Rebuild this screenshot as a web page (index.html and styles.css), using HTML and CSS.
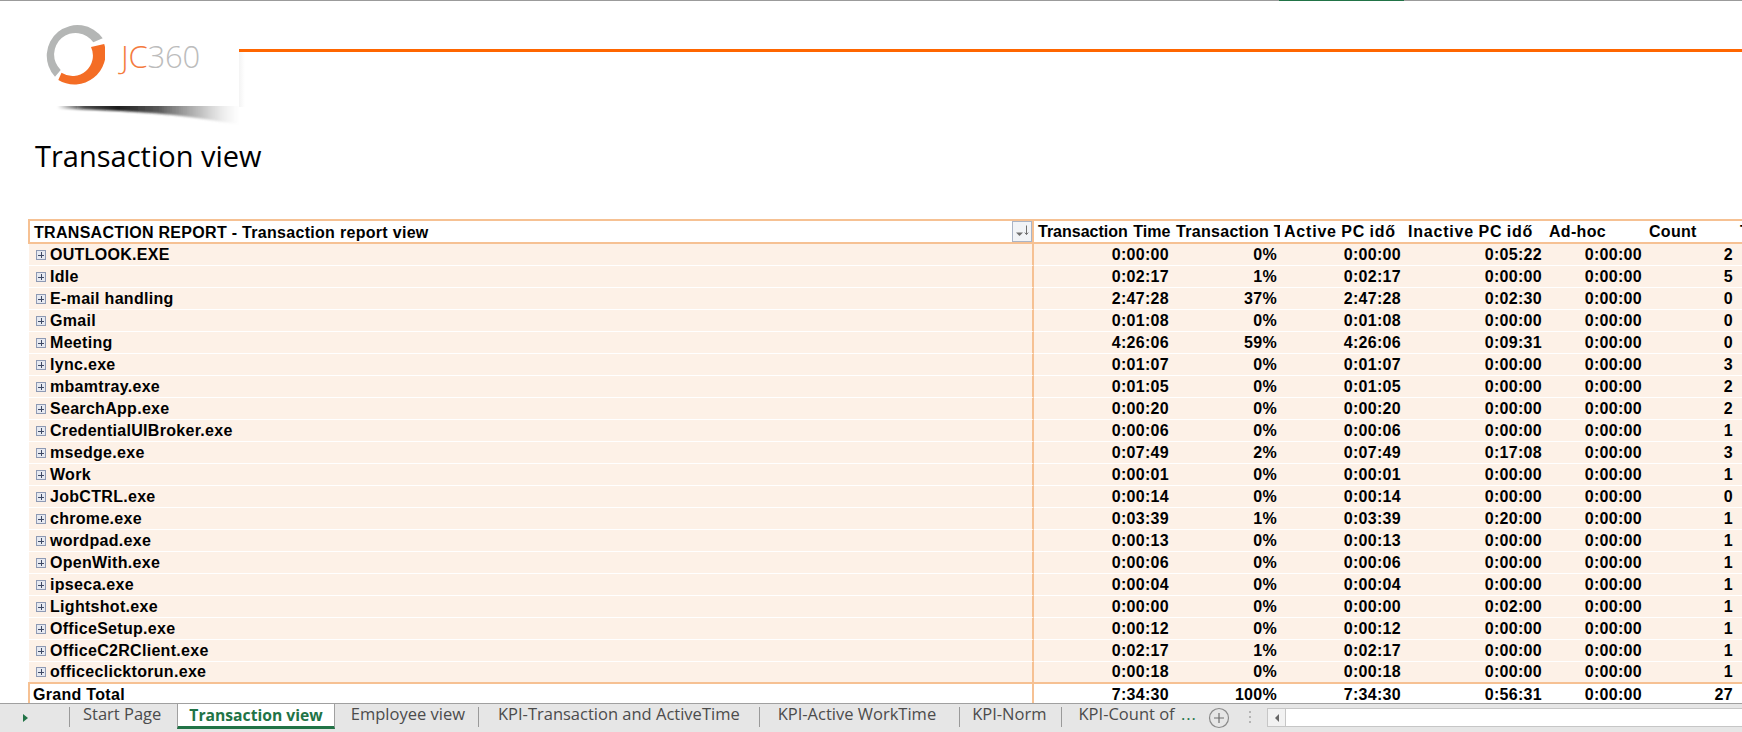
FILE: index.html
```html
<!DOCTYPE html>
<html lang="en">
<head>
<meta charset="utf-8">
<title>Transaction view</title>
<link rel="stylesheet" href="styles.css">
</head>
<body>
<div class="topline"><span class="topline-accent"></span></div>
<header class="brand">
  <div class="logo-block">
    <div class="logo">
      <svg class="logo-ring" width="60" height="62" viewBox="45 23 60 62" aria-hidden="true">
        <path fill="#b4b6b5" d="M55 76.7A30.7 30.7 0 1 1 102.7 38.3L93.3 42.3A21.5 21.5 0 1 0 60.7 70Z"/>
        <path fill="#f46d25" d="M104.2 44A31.2 31.2 0 0 1 58.3 80L61.5 72.8A20.4 20.4 0 0 0 91 47Z"/>
      </svg>
      <span class="logo-text"><span class="logo-jc">JC</span>360</span>
    </div>
    <svg class="logo-shadow" width="239" height="22" viewBox="0 0 239 22" aria-hidden="true">
      <defs>
        <linearGradient id="shade" x1="0" x2="1" y1="0" y2="0">
          <stop offset="0.13" stop-color="#000" stop-opacity="0"/>
          <stop offset="0.26" stop-color="#111" stop-opacity="0.75"/>
          <stop offset="0.42" stop-color="#111" stop-opacity="0.95"/>
          <stop offset="0.62" stop-color="#333" stop-opacity="0.8"/>
          <stop offset="0.82" stop-color="#777" stop-opacity="0.45"/>
          <stop offset="1" stop-color="#bbb" stop-opacity="0"/>
        </linearGradient>
        <filter id="soft" x="-5%" y="-50%" width="110%" height="200%"><feGaussianBlur stdDeviation="1.1"/></filter>
      </defs>
      <path fill="url(#shade)" filter="url(#soft)" d="M30 -4H239V18C215 15 190 10 150 7C110 4 70 3 30 2Z"/>
    </svg>
  </div>
  <div class="rule"></div>
</header>
<h1 class="page-title">Transaction view</h1>
<main class="report">
<table class="pivot">
  <colgroup><col class="c-a"><col class="c-b"><col class="c-c"><col class="c-d"><col class="c-e"><col class="c-f"><col class="c-g"><col class="c-h"></colgroup>
  <thead>
    <tr>
      <th class="label-head"><span class="label-wrap">TRANSACTION REPORT - Transaction report view<span class="filter"><svg width="19" height="18" viewBox="0 0 19 18" aria-hidden="true"><path fill="#6f6f6f" d="M3 10.5h7l-3.500 3.500z"/><path fill="none" stroke="#6f6f6f" d="M13.500 3.500v9M11.800 10.600l1.700 2 1.700-2"/></svg></span></span></th>
      <th class="head-first">Transaction Time</th><th>Transaction Time %</th><th class="head-wide">Active PC idő</th><th class="head-wide">Inactive PC idő</th><th>Ad-hoc</th><th>Count</th><th>T</th>
    </tr>
  </thead>
  <tbody>
    <tr><td class="name"><i class="exp"></i>OUTLOOK.EXE</td><td>0:00:00</td><td>0%</td><td>0:00:00</td><td>0:05:22</td><td>0:00:00</td><td>2</td><td></td></tr>
    <tr><td class="name"><i class="exp"></i>Idle</td><td>0:02:17</td><td>1%</td><td>0:02:17</td><td>0:00:00</td><td>0:00:00</td><td>5</td><td></td></tr>
    <tr><td class="name"><i class="exp"></i>E-mail handling</td><td>2:47:28</td><td>37%</td><td>2:47:28</td><td>0:02:30</td><td>0:00:00</td><td>0</td><td></td></tr>
    <tr><td class="name"><i class="exp"></i>Gmail</td><td>0:01:08</td><td>0%</td><td>0:01:08</td><td>0:00:00</td><td>0:00:00</td><td>0</td><td></td></tr>
    <tr><td class="name"><i class="exp"></i>Meeting</td><td>4:26:06</td><td>59%</td><td>4:26:06</td><td>0:09:31</td><td>0:00:00</td><td>0</td><td></td></tr>
    <tr><td class="name"><i class="exp"></i>lync.exe</td><td>0:01:07</td><td>0%</td><td>0:01:07</td><td>0:00:00</td><td>0:00:00</td><td>3</td><td></td></tr>
    <tr><td class="name"><i class="exp"></i>mbamtray.exe</td><td>0:01:05</td><td>0%</td><td>0:01:05</td><td>0:00:00</td><td>0:00:00</td><td>2</td><td></td></tr>
    <tr><td class="name"><i class="exp"></i>SearchApp.exe</td><td>0:00:20</td><td>0%</td><td>0:00:20</td><td>0:00:00</td><td>0:00:00</td><td>2</td><td></td></tr>
    <tr><td class="name"><i class="exp"></i>CredentialUIBroker.exe</td><td>0:00:06</td><td>0%</td><td>0:00:06</td><td>0:00:00</td><td>0:00:00</td><td>1</td><td></td></tr>
    <tr><td class="name"><i class="exp"></i>msedge.exe</td><td>0:07:49</td><td>2%</td><td>0:07:49</td><td>0:17:08</td><td>0:00:00</td><td>3</td><td></td></tr>
    <tr><td class="name"><i class="exp"></i>Work</td><td>0:00:01</td><td>0%</td><td>0:00:01</td><td>0:00:00</td><td>0:00:00</td><td>1</td><td></td></tr>
    <tr><td class="name"><i class="exp"></i>JobCTRL.exe</td><td>0:00:14</td><td>0%</td><td>0:00:14</td><td>0:00:00</td><td>0:00:00</td><td>0</td><td></td></tr>
    <tr><td class="name"><i class="exp"></i>chrome.exe</td><td>0:03:39</td><td>1%</td><td>0:03:39</td><td>0:20:00</td><td>0:00:00</td><td>1</td><td></td></tr>
    <tr><td class="name"><i class="exp"></i>wordpad.exe</td><td>0:00:13</td><td>0%</td><td>0:00:13</td><td>0:00:00</td><td>0:00:00</td><td>1</td><td></td></tr>
    <tr><td class="name"><i class="exp"></i>OpenWith.exe</td><td>0:00:06</td><td>0%</td><td>0:00:06</td><td>0:00:00</td><td>0:00:00</td><td>1</td><td></td></tr>
    <tr><td class="name"><i class="exp"></i>ipseca.exe</td><td>0:00:04</td><td>0%</td><td>0:00:04</td><td>0:00:00</td><td>0:00:00</td><td>1</td><td></td></tr>
    <tr><td class="name"><i class="exp"></i>Lightshot.exe</td><td>0:00:00</td><td>0%</td><td>0:00:00</td><td>0:02:00</td><td>0:00:00</td><td>1</td><td></td></tr>
    <tr><td class="name"><i class="exp"></i>OfficeSetup.exe</td><td>0:00:12</td><td>0%</td><td>0:00:12</td><td>0:00:00</td><td>0:00:00</td><td>1</td><td></td></tr>
    <tr><td class="name"><i class="exp"></i>OfficeC2RClient.exe</td><td>0:02:17</td><td>1%</td><td>0:02:17</td><td>0:00:00</td><td>0:00:00</td><td>1</td><td></td></tr>
    <tr><td class="name"><i class="exp"></i>officeclicktorun.exe</td><td>0:00:18</td><td>0%</td><td>0:00:18</td><td>0:00:00</td><td>0:00:00</td><td>1</td><td></td></tr>
  </tbody>
  <tfoot>
    <tr><td class="total-label">Grand Total</td><td>7:34:30</td><td>100%</td><td>7:34:30</td><td>0:56:31</td><td>0:00:00</td><td>27</td><td></td></tr>
  </tfoot>
</table>
</main>
<footer class="tabbar">
  <div class="tab-nav"><span class="nav-next"></span></div>
  <nav class="tabs">
    <a class="tab tab-start">Start Page</a>
    <a class="tab tab-active">Transaction view</a>
    <a class="tab tab-emp">Employee view</a>
    <a class="tab tab-kpi1">KPI-Transaction and ActiveTime</a>
    <a class="tab tab-kpi2">KPI-Active WorkTime</a>
    <a class="tab tab-kpi3">KPI-Norm</a>
    <a class="tab tab-kpi4">KPI-Count of <span class="more">...</span></a>
  </nav>
  <span class="add-tab"><svg width="22" height="22" viewBox="0 0 22 22" aria-hidden="true"><circle cx="11" cy="11" r="9.5" fill="none" stroke="#8a8a8a" stroke-width="1.2"/><path d="M11 6v10M6 11h10" stroke="#6f6f6f" stroke-width="1.2"/></svg></span>
  <span class="grip"></span>
  <div class="hscroll"><span class="hscroll-btn"><span class="arrow-left"></span></span></div>
</footer>
</body>
</html>
```
FILE: styles.css
```css
html, body {
  margin: 0;
  padding: 0;
}
body {
  width: 1742px;
  height: 732px;
  overflow: hidden;
  background: #fff;
  display: flex;
  flex-direction: column;
  font-family: "Liberation Sans", Arial, sans-serif;
  color: #000;
}
.topline {
  height: 1px;
  flex: none;
  background: #9b9b9b;
  padding-left: 1279px;
}
.topline-accent {
  display: block;
  width: 125px;
  height: 1px;
  background: #217346;
}
.brand {
  flex: none;
  display: flex;
  height: 135px;
  background: linear-gradient(90deg, #f4f4f4, #fff) 239px 51px / 6px 55px no-repeat;
}
.logo-block {
  width: 239px;
  flex: none;
  display: flex;
  flex-direction: column;
}
.logo {
  height: 105px;
  flex: none;
  display: flex;
  align-items: flex-start;
  padding: 22px 0 0 45px;
  box-sizing: border-box;
}
.logo-ring {
  flex: none;
}
.logo-text {
  font-family: "Open Sans", sans-serif;
  font-weight: 300;
  font-size: 31px;
  line-height: 36px;
  margin: 15px 0 0 16px;
  color: #bcbcbc;
  letter-spacing: -0.2px;
}
.logo-jc {
  color: #f47b3e;
}
.logo-shadow {
  display: block;
  flex: none;
}
.rule {
  flex: 1;
  height: 3px;
  margin-top: 48px;
  background: #ff6600;
}
.page-title {
  flex: none;
  margin: 0;
  padding-left: 35px;
  font-family: "Open Sans", sans-serif;
  font-weight: 400;
  font-size: 29px;
  line-height: 40px;
  height: 83px;
}
.report {
  flex: 1;
  min-height: 0;
  overflow: hidden;
  padding-left: 28px;
}
.pivot {
  table-layout: fixed;
  width: 1732px;
  border-collapse: separate;
  border-spacing: 0;
  font-size: 16px;
  font-weight: 700;
  line-height: 21px;
  letter-spacing: 0.3px;
}
.c-a { width: 1006px; }
.c-b { width: 138px; }
.c-c { width: 108px; }
.c-d { width: 124px; }
.c-e { width: 141px; }
.c-f { width: 100px; }
.c-g { width: 91px; }
.c-h { width: 24px; }
.pivot th,
.pivot td {
  padding: 0 3px 0 0;
  white-space: nowrap;
  overflow: hidden;
}
.pivot th {
  text-align: left;
  padding: 1px 0 0 4px;
  height: 20px;
  line-height: 20px;
  background: #fff;
  border-top: 2px solid #f6c193;
  border-bottom: 2px solid #f6c193;
}
.pivot .head-first {
  letter-spacing: 0;
  word-spacing: 1px;
}
.pivot .head-wide {
  letter-spacing: 0.8px;
  word-spacing: -0.8px;
}
.pivot .label-head {
  border-left: 2px solid #f6c193;
  border-right: 2px solid #f6c193;
  padding: 0 0 0 4px;
  height: 21px;
}
.label-wrap {
  display: flex;
  height: 21px;
  line-height: 23px;
  align-items: flex-start;
  justify-content: space-between;
}
.filter {
  width: 18px;
  height: 19px;
  flex: none;
  display: block;
  overflow: hidden;
  border: 1px solid #aab4c6;
  background: #f2f4f7;
}
.filter svg {
  display: block;
}
.pivot tbody td {
  height: 21px;
  text-align: right;
  background: #fdf1e7;
  border-bottom: 1px solid #fff;
}
.pivot tbody td.name {
  text-align: left;
  padding-left: 7px;
  border-left: 1px solid #fff;
  border-right: 2px solid #f6c193;
}
.pivot tbody tr:last-child td {
  border-bottom: 0;
  height: 20px;
  line-height: 20px;
}
.exp {
  display: inline-block;
  width: 8px;
  height: 8px;
  margin-right: 4px;
  vertical-align: 0;
  border: 1px solid #8e99b3;
  background:
    linear-gradient(#3f4a66, #3f4a66) center / 6px 1px no-repeat,
    linear-gradient(#3f4a66, #3f4a66) center / 1px 6px no-repeat,
    #e6e9f1;
}
.pivot tfoot td {
  height: 21px;
  text-align: right;
  background: #fff;
  border-top: 2px solid #f6c193;
}
.pivot tfoot td.total-label {
  text-align: left;
  padding-left: 3px;
  border-left: 2px solid #f6c193;
  border-right: 2px solid #f6c193;
}
.tabbar {
  flex: none;
  height: 29px;
  box-sizing: border-box;
  display: flex;
  align-items: flex-start;
  background: #e6e6e6;
  border-top: 1px solid #a0a0a0;
  font-family: "Open Sans", sans-serif;
  font-size: 16.5px;
  color: #4c4c4c;
}
.tab-nav {
  width: 69px;
  flex: none;
  height: 28px;
  display: flex;
  align-items: center;
  padding-left: 23px;
  box-sizing: border-box;
}
.nav-next {
  width: 0;
  height: 0;
  border-left: 5px solid #217346;
  border-top: 4.5px solid transparent;
  border-bottom: 4.5px solid transparent;
}
.tabs {
  display: flex;
  flex: none;
  width: 1135px;
}
.tab {
  display: block;
  white-space: nowrap;
  border-left: 1px solid #9a9a9a;
  box-sizing: border-box;
  margin-top: 3px;
  height: 20px;
  line-height: 14px;
}
.tab-start { padding: 0 16px 0 13px; }
.tab-active {
  margin-top: -1px;
  height: 26px;
  line-height: 22px;
  padding: 0 11px;
  background: #fff;
  color: #217346;
  font-weight: 700;
  font-size: 15.7px;
  border: 1px solid #a0a0a0;
  border-bottom: 3px solid #217346;
}
.tab-emp { border-left: 0; padding: 0 13px 0 16px; }
.tab-kpi1 { padding: 0 19px 0 19px; }
.tab-kpi2 { padding: 0 23px 0 18px; }
.tab-kpi3 { padding: 0 14px 0 12px; }
.tab-kpi4 { padding: 0 0 0 17px; }
.more {
  color: #217346;
  margin-left: 2px;
  letter-spacing: 1px;
}
.add-tab {
  flex: none;
  margin: 3px 0 0 4px;
  height: 22px;
}
.add-tab svg {
  display: block;
}
.grip {
  flex: none;
  width: 2px;
  height: 14px;
  margin: 7px 0 0 19px;
  background: repeating-linear-gradient(#b4b4b4 0 2px, transparent 2px 5px);
}
.hscroll {
  flex: 1;
  height: 19px;
  margin: 4px 0 0 16px;
  background: #fff;
  border: 1px solid #c6c6c6;
  border-right: 0;
  box-sizing: border-box;
}
.hscroll-btn {
  display: flex;
  align-items: center;
  justify-content: center;
  width: 17px;
  height: 17px;
  background: #f2f2f2;
  border-right: 1px solid #c6c6c6;
}
.arrow-left {
  width: 0;
  height: 0;
  border-right: 4px solid #666;
  border-top: 4px solid transparent;
  border-bottom: 4px solid transparent;
}
```
